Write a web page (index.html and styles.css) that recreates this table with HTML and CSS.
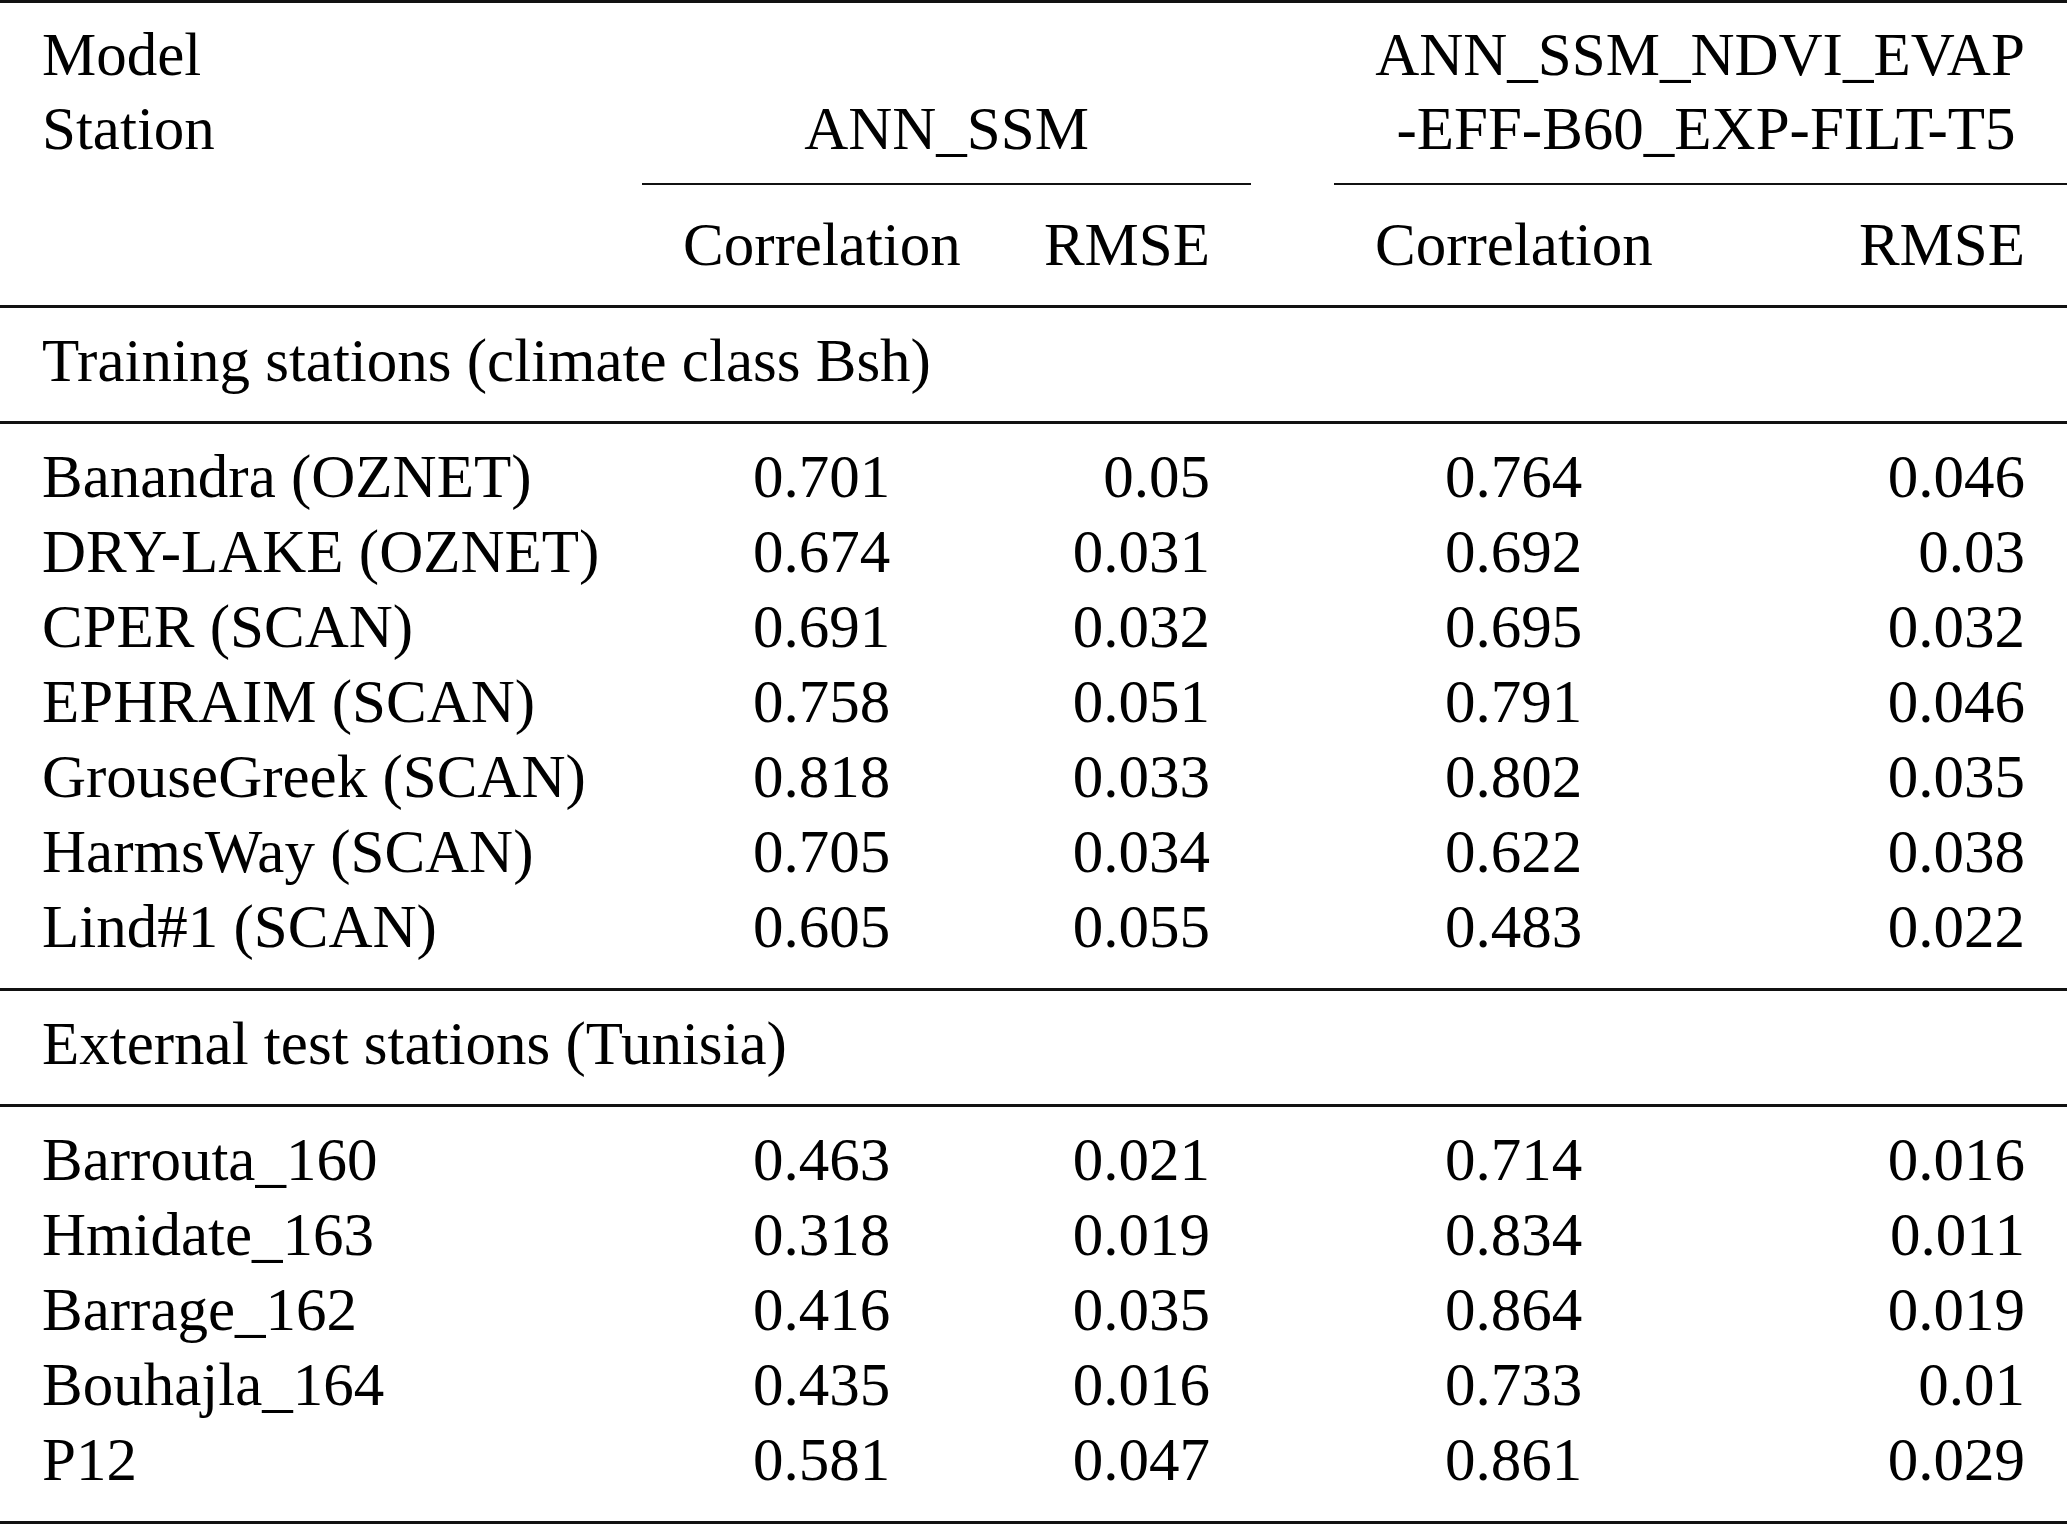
FILE: index.html
```html
<!DOCTYPE html>
<html lang="en">
<head>
<meta charset="utf-8">
<title>Model comparison table</title>
<link rel="stylesheet" href="styles.css">
</head>
<body>
<div class="tbl">
  <div class="row head-a">
    <div class="c c-stn two">Model<br>Station</div>
    <div class="c grp grp1 two"><span>ANN_SSM</span></div>
    <div class="c c-gap"></div>
    <div class="c grp grp2 two">ANN_SSM_NDVI_EVAP<br><span class="l2">-EFF-B60_EXP-FILT-T5</span></div>
  </div>
  <div class="row head-b">
    <div class="c c-stn"></div>
    <div class="c c-corr">Correlation</div>
    <div class="c c-rmse">RMSE</div>
    <div class="c c-gap"></div>
    <div class="c c-corr">Correlation</div>
    <div class="c c-rmse2">RMSE</div>
  </div>
  <div class="section">Training stations (climate class Bsh)</div>
  <div class="group">
    <div class="row"><div class="c c-stn">Banandra (OZNET)</div><div class="c c-corr">0.701</div><div class="c c-rmse">0.05</div><div class="c c-gap"></div><div class="c c-corr">0.764</div><div class="c c-rmse2">0.046</div></div>
    <div class="row"><div class="c c-stn">DRY-LAKE (OZNET)</div><div class="c c-corr">0.674</div><div class="c c-rmse">0.031</div><div class="c c-gap"></div><div class="c c-corr">0.692</div><div class="c c-rmse2">0.03</div></div>
    <div class="row"><div class="c c-stn">CPER (SCAN)</div><div class="c c-corr">0.691</div><div class="c c-rmse">0.032</div><div class="c c-gap"></div><div class="c c-corr">0.695</div><div class="c c-rmse2">0.032</div></div>
    <div class="row"><div class="c c-stn">EPHRAIM (SCAN)</div><div class="c c-corr">0.758</div><div class="c c-rmse">0.051</div><div class="c c-gap"></div><div class="c c-corr">0.791</div><div class="c c-rmse2">0.046</div></div>
    <div class="row"><div class="c c-stn">GrouseGreek (SCAN)</div><div class="c c-corr">0.818</div><div class="c c-rmse">0.033</div><div class="c c-gap"></div><div class="c c-corr">0.802</div><div class="c c-rmse2">0.035</div></div>
    <div class="row"><div class="c c-stn">HarmsWay (SCAN)</div><div class="c c-corr">0.705</div><div class="c c-rmse">0.034</div><div class="c c-gap"></div><div class="c c-corr">0.622</div><div class="c c-rmse2">0.038</div></div>
    <div class="row"><div class="c c-stn">Lind#1 (SCAN)</div><div class="c c-corr">0.605</div><div class="c c-rmse">0.055</div><div class="c c-gap"></div><div class="c c-corr">0.483</div><div class="c c-rmse2">0.022</div></div>
  </div>
  <div class="section">External test stations (Tunisia)</div>
  <div class="group">
    <div class="row"><div class="c c-stn">Barrouta_160</div><div class="c c-corr">0.463</div><div class="c c-rmse">0.021</div><div class="c c-gap"></div><div class="c c-corr">0.714</div><div class="c c-rmse2">0.016</div></div>
    <div class="row"><div class="c c-stn">Hmidate_163</div><div class="c c-corr">0.318</div><div class="c c-rmse">0.019</div><div class="c c-gap"></div><div class="c c-corr">0.834</div><div class="c c-rmse2">0.011</div></div>
    <div class="row"><div class="c c-stn">Barrage_162</div><div class="c c-corr">0.416</div><div class="c c-rmse">0.035</div><div class="c c-gap"></div><div class="c c-corr">0.864</div><div class="c c-rmse2">0.019</div></div>
    <div class="row"><div class="c c-stn">Bouhajla_164</div><div class="c c-corr">0.435</div><div class="c c-rmse">0.016</div><div class="c c-gap"></div><div class="c c-corr">0.733</div><div class="c c-rmse2">0.01</div></div>
    <div class="row"><div class="c c-stn">P12</div><div class="c c-corr">0.581</div><div class="c c-rmse">0.047</div><div class="c c-gap"></div><div class="c c-corr">0.861</div><div class="c c-rmse2">0.029</div></div>
  </div>
</div>
</body>
</html>
```
FILE: styles.css
```css
html, body {
  margin: 0;
  padding: 0;
  background: #ffffff;
}

body {
  font-family: "Liberation Serif", "Times New Roman", serif;
  font-size: 61px;
  color: #000000;
  overflow: hidden;
}

.tbl {
  width: 2067px;
  border-top: 3px solid #111111;
}

.row {
  display: grid;
  grid-template-columns: 642px 359px 250px 83px 359px 374px;
  line-height: 75px;
}

.c {
  padding: 0 41px;
  white-space: nowrap;
}

.c-stn {
  padding: 0 0 0 42px;
}

.c-corr {
  text-align: center;
}

.c-rmse {
  text-align: right;
}

.c-rmse2 {
  text-align: right;
  padding-right: 42px;
}

.c-gap {
  padding: 0;
}

/* Header: spanning group titles */
.head-a .c {
  padding-top: 15px;
  padding-bottom: 17px;
  line-height: 74px;
}

.head-a .c-stn {
  grid-column: 1 / 2;
}

.head-a .grp {
  text-align: center;
  border-bottom: 2px solid #111111;
}

.head-a .grp1 {
  grid-column: 2 / 4;
  display: flex;
  align-items: flex-end;
  justify-content: center;
}

.head-a .c-gap {
  grid-column: 4 / 5;
}

.head-a .grp2 {
  grid-column: 5 / 7;
  padding-left: 20px;
  padding-right: 21px;
}

.head-a .l2 {
  padding-left: 12px;
}

/* Header: sub columns */
.head-b {
  padding: 22px 0 23px;
  border-bottom: 3px solid #111111;
}

/* Section captions */
.section {
  padding: 15px 0 23px 42px;
  line-height: 75px;
  white-space: nowrap;
  border-bottom: 3px solid #111111;
}

/* Data groups */
.group {
  padding: 15px 0 24px;
  border-bottom: 3px solid #111111;
}
```
